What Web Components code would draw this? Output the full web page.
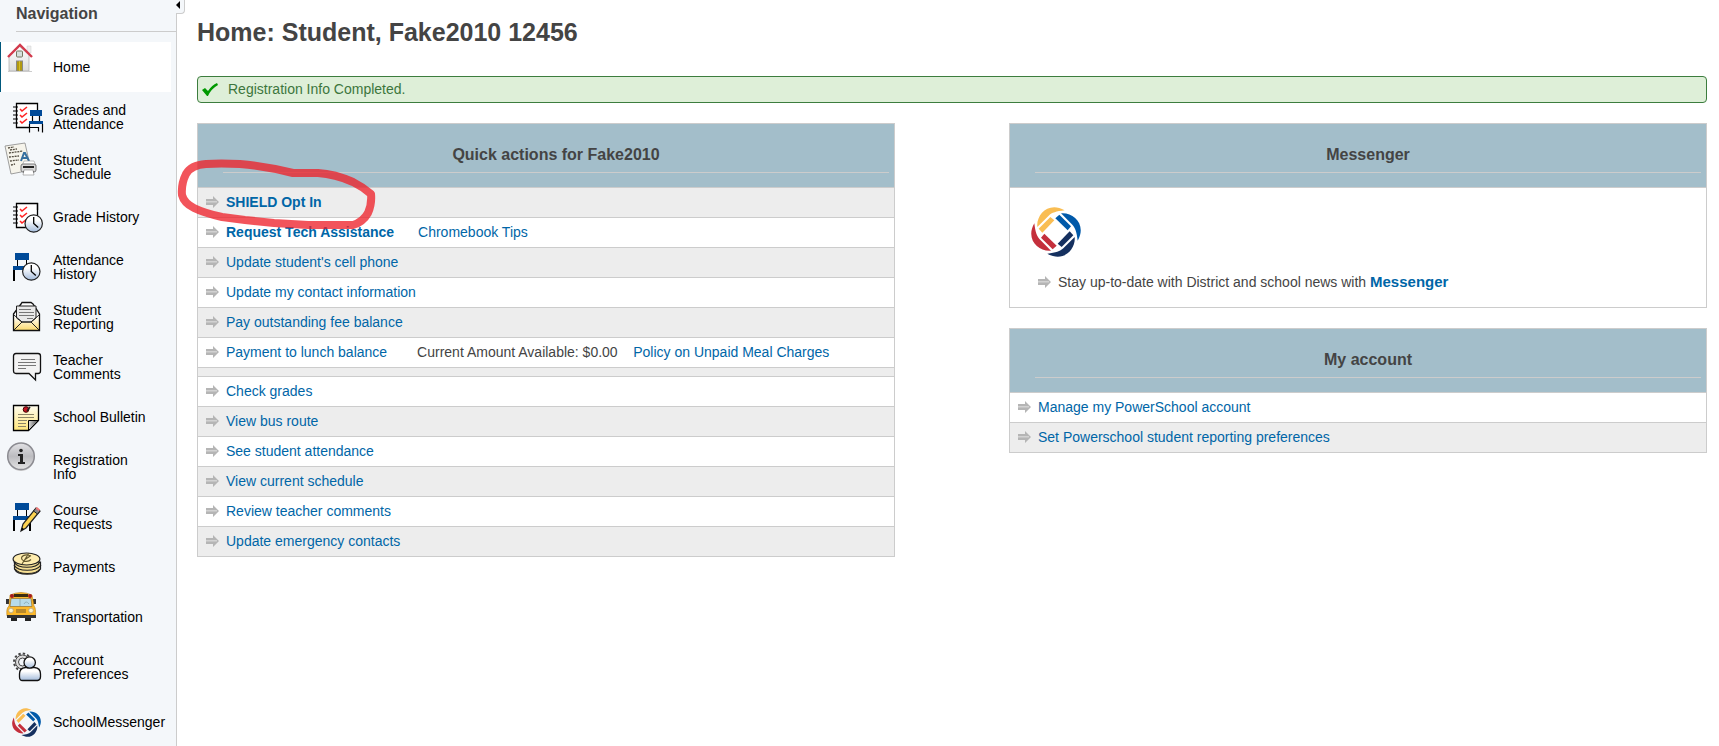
<!DOCTYPE html>
<html lang="en">
<head>
<meta charset="utf-8">
<title>Home: Student, Fake2010 12456</title>
<style>
html, body {
    margin: 0;
    height: 100%;
}
body {
    font: 14px/20px "Liberation Sans", Arial, sans-serif;
    color: #444;
    background: #fff;
}
a {
    color: #0066a7;
    text-decoration: none;
}
a:hover {
    text-decoration: underline;
}
h1 {
    margin: 0 0 29px;
    font-size: 25px;
    line-height: 30px;
}
.columns {
    display: grid;
    grid-template-columns: 1fr 1fr;
    gap: 114px;
    align-items: start;
    margin-top: 20px;
}
.column {
    display: grid;
    gap: 20px;
}
.messenger {
    padding: 19px 21px 10px;
}
.messenger school-icon {
    --icon-size: 50px;
}
.messenger action-row {
    border: 0;
    margin-top: 11px;
    padding-left: 7px;
}
.messenger a {
    font-size: 15px;
}
</style>
</head>
<body>
<portal-page>
    <side-nav slot="nav" heading="Navigation">
        <nav-item icon="home" raised current>Home</nav-item>
        <nav-item icon="grades">Grades and Attendance</nav-item>
        <nav-item icon="schedule" raised>Student Schedule</nav-item>
        <nav-item icon="gradeHistory">Grade History</nav-item>
        <nav-item icon="attendance">Attendance History</nav-item>
        <nav-item icon="reporting">Student Reporting</nav-item>
        <nav-item icon="comments">Teacher Comments</nav-item>
        <nav-item icon="bulletin">School Bulletin</nav-item>
        <nav-item icon="info" raised>Registration Info</nav-item>
        <nav-item icon="course">Course Requests</nav-item>
        <nav-item icon="payments">Payments</nav-item>
        <nav-item icon="bus" raised>Transportation</nav-item>
        <nav-item icon="account">Account Preferences</nav-item>
        <nav-item icon="messenger" tall>SchoolMessenger</nav-item>
    </side-nav>

    <h1>Home: Student, Fake2010 12456</h1>
    <success-message>Registration Info Completed.</success-message>

    <div class="columns">
        <action-panel heading="Quick actions for Fake2010">
            <action-row><a href="#shield"><b>SHIELD Opt In</b></a></action-row>
            <action-row gap="medium"><a href="#tech"><b>Request Tech Assistance</b></a><a href="#tips">Chromebook Tips</a></action-row>
            <action-row><a href="#cell">Update student's cell phone</a></action-row>
            <action-row><a href="#contact">Update my contact information</a></action-row>
            <action-row><a href="#fees">Pay outstanding fee balance</a></action-row>
            <action-row gap="wide"><a href="#lunch">Payment to lunch balance</a><span>Current Amount Available: $0.00 &nbsp;&nbsp; <a href="#policy">Policy on Unpaid Meal Charges</a></span></action-row>
            <action-row spacer></action-row>
            <action-row><a href="#grades">Check grades</a></action-row>
            <action-row><a href="#bus">View bus route</a></action-row>
            <action-row><a href="#attendance">See student attendance</a></action-row>
            <action-row><a href="#schedule">View current schedule</a></action-row>
            <action-row><a href="#comments">Review teacher comments</a></action-row>
            <action-row><a href="#emergency">Update emergency contacts</a></action-row>
        </action-panel>

        <div class="column">
            <action-panel heading="Messenger">
                <div class="messenger">
                    <school-icon name="messenger"></school-icon>
                    <action-row><span>Stay up-to-date with District and school news with <a href="#messenger"><b>Messenger</b></a></span></action-row>
                </div>
            </action-panel>
            <action-panel heading="My account" light-first>
                <action-row><a href="#manage">Manage my PowerSchool account</a></action-row>
                <action-row><a href="#preferences">Set Powerschool student reporting preferences</a></action-row>
            </action-panel>
        </div>
    </div>
    <marker-circle slot="overlay"></marker-circle>
</portal-page>

<script>
const notebook = `
    <path d="M25.500 9V2.500H4.500V26.500H18" fill="#fff" stroke="#000" stroke-width="1.300"/>
    <path d="M1 6h5M1 10h5M1 14h5M1 18h5M1 22h5" stroke="#000" stroke-width="1.200"/>
    <path d="M8 8l2 2 5-4M8 14l2 2 5-4M8 20l2 2 5-4" fill="none" stroke="#f22" stroke-width="1.600"/>`;

const clock = `
    <circle r="8.700" fill="url(#steel)" stroke="#222" stroke-width="1.200"/>
    <path d="M0-6.500V0l4.500 4" fill="none" stroke="#000" stroke-width="1.300"/>`;

const steel = `
    <linearGradient id="steel" x2="0" y2="1"><stop offset=".3" stop-color="#fff"/><stop offset="1" stop-color="#a3bbdb"/></linearGradient>`;

const petal = `
    <path d="M-56-15C-60-52-22-93 26-65C0-62-12-58-22-49L-53-18Z"/>
    <path d="M-52-10L-17-45L-5-35L-41 2Z"/>`;

// each icon: [viewBox, markup]
const icons = {
    home: ['0 0 36 36', `
        <defs><linearGradient id="wall" x2="0" y2="1"><stop stop-color="#fff"/><stop offset="1" stop-color="#ddd"/></linearGradient></defs>
        <path d="M23 4h4v7h-4z" fill="#eee" stroke="#ccc" stroke-width=".5"/>
        <path d="M5 13L15 4l10 9v16H5z" fill="url(#wall)" stroke="#aaa" stroke-width=".7"/>
        <path d="M4 15L16 3l12 12" fill="none" stroke="#d23a4c" stroke-width="2.400"/>
        <rect x="12.500" y="9" width="6" height="6" rx="1" fill="#d5e0dc" stroke="#777661"/>
        <rect x="12.500" y="19" width="6" height="10" fill="#b29a10" stroke="#888"/>
        <path d="M15.500 19v10" stroke="#d6be28"/><path d="M4 29.500h24" stroke="#ccc"/>`],
    grades: ['0 0 32 32', `${notebook}
        <path d="M18 9h12v6H18zM17 20h14v3H17z" fill="#004a98"/>
        <path d="M20.500 15v5M27.500 15v5M17.500 23v8.500M30.500 23v8.500M17.500 26.500h9v4" fill="none" stroke="#000" stroke-width="1.200"/>`],
    schedule: ['0 0 36 36', `
        <path d="M1 4L21 1l6 27-20 4z" fill="#f6f4eb" stroke="#888" stroke-width=".8"/>
        <path d="M4 6l6-1M6 8l7-1M5 11l14-2M5 15l10-1M6 19l9-1M7 23l4-1" stroke="#554f43" stroke-width="1.300" stroke-dasharray="2 .8"/>
        <path d="M17 19l3-8h1l4 8m-7-3h6" fill="none" stroke="#356f9f" stroke-width="2"/>
        <path d="M20 19h10l2 5H18z" fill="#fff" stroke="#999" stroke-width=".6"/>
        <rect x="17" y="22" width="15" height="8" rx="2" fill="#d8d8d8" stroke="#777"/>
        <path d="M19 25h11M19 30h11" stroke="#222" stroke-width="2"/>
        <path d="M20 28h9l1 5H19z" fill="#fff" stroke="#888" stroke-width=".6"/>`],
    gradeHistory: ['0 0 32 32', `<defs>${steel}</defs>${notebook}
        <path d="M25.500 2v14" stroke="#000" stroke-width="1.300"/><g transform="translate(21.700 22.500)">${clock}</g>`],
    attendance: ['0 0 32 32', `<defs>${steel}</defs>
        <path d="M3 2h14v7H3zM1 15h14v4H1z" fill="#004a98"/>
        <path d="M5.500 9v6M14.500 9v6" stroke="#000"/><path d="M2 19v11" stroke="#000" stroke-width="2"/>
        <g transform="translate(19.300 20.500)">${clock}</g>`],
    reporting: ['0 0 32 32', `
        <defs><linearGradient id="env" x2="0" y2="1"><stop offset=".5" stop-color="#fff"/><stop offset="1" stop-color="#fbd96b"/></linearGradient></defs>
        <path d="M1.500 13L9 3l1-1.500h9L21 3l6.500 10v16.500h-26z" fill="url(#env)" stroke="#111" stroke-width="1.300"/>
        <path d="M4.500 17V5h19.500v12l-5 4h-9z" fill="#e9e9e9" stroke="#222"/>
        <path d="M7 8.500h12M7 11.500h15M7 14.500h15M15 17.500h6" stroke="#777"/>
        <path d="M2 14l8 7h9l8-7M2 29l8-8M27 29l-8-8" fill="none" stroke="#222"/>`],
    comments: ['0 0 32 32', `
        <path d="M4 2.500h22q2.500 0 2.500 2.500v15q0 2.500-2.500 2.500h-2.500V29L17 22.500H4Q1.500 22.500 1.500 20V5q0-2.500 2.500-2.500z" fill="#f3f3f3" stroke="#111" stroke-width="1.300"/>
        <path d="M9 8.500h14M6 11.500h18M6 14.500h18M6 17.500h8" stroke="#777"/>`],
    bulletin: ['0 0 32 32', `
        <defs><linearGradient id="note" x2="0" y2="1"><stop stop-color="#fffdf0"/><stop offset="1" stop-color="#ffe67a"/></linearGradient>
        <linearGradient id="fold"><stop stop-color="#ddd"/><stop offset="1" stop-color="#444"/></linearGradient></defs>
        <path d="M1.500 4.500h25v15l-10 10h-15z" fill="url(#note)" stroke="#000" stroke-width="1.300"/>
        <path d="M16.500 29.500v-10h10z" fill="url(#fold)" stroke="#000"/>
        <path d="M6 13.500h16M6 16.500h16M6 19.500h9M6 22.500h8M6 25.500h8" stroke="#8c8567"/>
        <circle cx="14" cy="8.500" r="2.800" fill="#c41422" stroke="#400"/><path d="M15 10l3-4" stroke="#222" stroke-width="1.500"/>`],
    info: ['0 0 36 36', `
        <defs><linearGradient id="ball" x2="0" y2="1"><stop stop-color="#e2e2e5"/><stop offset=".5" stop-color="#bcbcc0"/><stop offset="1" stop-color="#e4e4e4"/></linearGradient></defs>
        <circle cx="17" cy="15.500" r="13.500" fill="#ccc"/>
        <circle cx="17" cy="14.300" r="13.300" fill="url(#ball)" stroke="#8c8c92" stroke-width="1.500"/>
        <circle cx="17" cy="8.500" r="1.800" fill="#222"/>
        <path d="M14 12h5v8h2v2h-7v-2h2v-6h-2z" fill="#222"/>`],
    course: ['0 0 32 32', `
        <path d="M3 2h14v7H3zM1 15h18v4H1z" fill="#004a98"/>
        <path d="M5.500 9v6M14.500 9v6" stroke="#000"/><path d="M2 19v11M18 20v10" stroke="#000" stroke-width="2"/>
        <path d="M9 30l2-7L24 7l4 3-14 17z" fill="#fcd251" stroke="#222" stroke-width="1.200"/>
        <path d="M21.500 10L24 7l4 3-2.500 3z" fill="#888" stroke="#222"/><path d="M23.500 7.500L25 6l3 2.500-1 2z" fill="#e77"/>
        <path d="M9 30l1-3.500 2 1.500z"/>`],
    payments: ['0 0 32 32', `
        <g fill="#f6df93" stroke="#222" stroke-width="1.200">
            <path d="M2.500 11v7c3 7 22 7 26 0v-7z"/>
            <path d="M2 14c4 7 22 7 27 0M2 11c4 7 22 7 26 0M3 18c4 6 21 6 25 0" fill="none"/>
            <ellipse cx="14.500" cy="8" rx="13.400" ry="6" fill="#ffedae"/>
        </g>
        <path d="M18 4.500c-5-2-10 1-8 4s7 2 9 0M17 2L10 13M13 8.500l6-4" fill="none" stroke="#665a30" stroke-width="1.200"/>`],
    bus: ['0 0 36 36', `
        <path d="M7 23h6v6H7zM21 23h6v6h-6z" fill="#222"/>
        <path d="M2 7h3v5H2zM29 7h3v5h-3z" fill="#333"/>
        <path d="M6 3Q17-2 28 3l2 11q2 2 1.500 10H3q-1-8 2-10z" fill="#fdb92a" stroke="#b8801a" stroke-width=".6"/>
        <path d="M10 2h14v3H10z" fill="#3b2d10"/>
        <circle cx="8" cy="4" r="2" fill="#a41a20"/><circle cx="26" cy="4" r="2" fill="#a41a20"/>
        <path d="M7 6.500h20l1 8H6z" fill="#b7dbe9" stroke="#987028" stroke-width=".7"/>
        <path d="M16 7v7M20 12q2-4 5 0" fill="none" stroke="#8fb0ba"/>
        <circle cx="7" cy="18.500" r="2.300" fill="#fff4c8" stroke="#999" stroke-width=".6"/>
        <circle cx="27" cy="18.500" r="2.300" fill="#fff4c8" stroke="#999" stroke-width=".6"/>
        <path d="M12 17h10v4H12z" fill="#b9892b"/><path d="M3 23h29v3H3z" fill="#333"/>`],
    account: ['0 0 32 32', `<defs>${steel}</defs>
        <circle cx="10.500" cy="11" r="8.500" fill="none" stroke="#444" stroke-width="2" stroke-dasharray="2.400 2.050"/>
        <circle cx="10.500" cy="11" r="7" fill="#ddd" stroke="#444"/><circle cx="10.500" cy="11" r="4" fill="#f4f7fa" stroke="#444"/>
        <path d="M7.500 26v-3q0-6 6-6.500h9q6 .5 6 6.500v3q0 3-3 3.500H10.500q-3 0-3-3.500z" fill="url(#steel)" stroke="#111" stroke-width="1.300"/>
        <circle cx="17.700" cy="11.500" r="5.700" fill="url(#steel)" stroke="#111" stroke-width="1.300"/>`],
    messenger: ['-75 -75 150 150', `
        <g fill="#f9bd53">${petal}</g>
        <g fill="#0059a9" transform="rotate(90)">${petal}</g>
        <g fill="#15305f" transform="rotate(180)">${petal}</g>
        <g fill="#c42f3c" transform="rotate(270)">${petal}</g>`],
    arrow: ['0 0 13 12', `
        <path d="M0 3h7V0l6 6-6 6V9H0z" fill="#b5b5b5"/><path d="M0 5h11v1.500H0z" fill="#d2d2d2"/>`],
    check: ['0 0 16 13', `
        <path d="M0 7l3-2 3 3Q10 2 15 0l1 2Q9 6 6 13H5z" fill="#090"/>`],
};

class SchoolIcon extends HTMLElement {
    constructor() {
        super();
        this.attachShadow({ mode: 'open' });
    }

    connectedCallback() {
        const [viewBox, markup] = icons[this.getAttribute('name')];
        this.shadowRoot.innerHTML = `
<style>
:host {
    display: block;
    flex: none;
    width: var(--icon-size, 32px);
    height: var(--icon-height, var(--icon-size, 32px));
}
svg {
    display: block;
    width: 100%;
    height: 100%;
}
</style>
<svg viewBox="${viewBox}" aria-hidden="true">${markup}</svg>`;
    }
}

class PortalPage extends HTMLElement {
    constructor() {
        super();
        this.attachShadow({ mode: 'open' }).innerHTML = `
<style>
:host {
    display: flex;
    position: relative;
    height: 100vh;
    overflow: hidden;
}
main {
    flex: 1;
    min-width: 0;
    padding: 17px 12px 20px 20px;
}
</style>
<slot name="nav"></slot>
<main><slot></slot></main>
<slot name="overlay"></slot>`;
    }
}

class SideNav extends HTMLElement {
    constructor() {
        super();
        this.attachShadow({ mode: 'open' });
    }

    connectedCallback() {
        this.shadowRoot.innerHTML = `
<style>
:host {
    display: block;
    position: relative;
    flex: none;
    width: 176px;
    background: #f4f7fa;
    border-right: 1px solid #ccc;
}
h2 {
    margin: 0 0 10px 16px;
    padding: 4px 0 7px;
    border-bottom: 1px solid #ccc;
    font-size: 16px;
    line-height: 20px;
}
nav {
    margin-right: 5px;
}
/* tab hanging over the right border */
button {
    position: absolute;
    top: 0;
    left: 100%;
    width: 9px;
    height: 14px;
    padding: 0;
    border: solid #ccc;
    border-width: 0 1px 1px 0;
    border-radius: 0 0 4px 0;
    background: #f4f7fa;
}
svg {
    display: block;
    width: 4px;
    height: 8px;
    margin-bottom: 4px;
}
</style>
<h2>${this.getAttribute('heading')}</h2>
<nav><slot></slot></nav>
<button type="button" aria-label="Collapse navigation"><svg viewBox="0 0 4 8"><path d="M4 0v8L0 4z"/></svg></button>`;
    }
}

class NavItem extends HTMLElement {
    constructor() {
        super();
        this.attachShadow({ mode: 'open' });
    }

    connectedCallback() {
        this.shadowRoot.innerHTML = `
<style>
:host {
    display: block;
}
a {
    display: grid;
    grid-template-columns: 41px 1fr;
    align-items: center;
    height: 50px;
    padding-left: 12px;
    color: #000;
    line-height: 14px;
    text-decoration: none;
}
span {
    max-width: 100px;
}
:host([raised]) a {
    grid-template-columns: 49px 1fr;
    padding-left: 4px;
}
:host([raised]) school-icon {
    --icon-size: 36px;
    align-self: start;
}
:host([tall]) a {
    height: 60px;
}
:host([tall]) school-icon {
    --icon-size: 29px;
}
:host([current]) a {
    background: #fff;
    box-shadow: inset 1px 0 #00587c;
}
</style>
<a href="#${this.getAttribute('icon')}"><school-icon name="${this.getAttribute('icon')}"></school-icon><span><slot></slot></span></a>`;
    }
}

class SuccessMessage extends HTMLElement {
    constructor() {
        super();
        this.attachShadow({ mode: 'open' }).innerHTML = `
<style>
:host {
    display: flex;
    align-items: center;
    gap: 10px;
    padding: 2px 4px 3px;
    border: 1px solid #3c7d3e;
    border-radius: 4px;
    background: #deefd8;
    color: #3c763d;
}
school-icon {
    --icon-size: 16px;
    --icon-height: 13px;
}
</style>
<school-icon name="check"></school-icon>
<div role="status"><slot></slot></div>`;
    }
}

class ActionPanel extends HTMLElement {
    constructor() {
        super();
        this.attachShadow({ mode: 'open' });
    }

    connectedCallback() {
        this.shadowRoot.innerHTML = `
<style>
:host {
    display: block;
    border: 1px solid #ccc;
}
header {
    padding: 21px 5px 14px 25px;
    background: #a3beca;
}
h2 {
    margin: 0;
    padding-bottom: 7px;
    border-bottom: 1px solid #ccc;
    font-size: 16px;
    line-height: 20px;
    text-align: center;
}
::slotted(*) {
    border-top: 1px solid #ccc;
}
:host(:not([light-first])) ::slotted(action-row:nth-child(odd)),
:host([light-first]) ::slotted(action-row:nth-child(even)) {
    background: #ededed;
}
</style>
<header><h2>${this.getAttribute('heading')}</h2></header>
<slot></slot>`;
    }
}

class ActionRow extends HTMLElement {
    constructor() {
        super();
        this.attachShadow({ mode: 'open' });
    }

    connectedCallback() {
        const arrow = this.hasAttribute('spacer') ? '' : '<school-icon name="arrow"></school-icon>';
        this.shadowRoot.innerHTML = `
<style>
:host {
    display: flex;
    align-items: center;
    padding: 4px 8px 5px;
}
:host([spacer]) {
    padding: 4px 8px;
}
school-icon {
    --icon-size: 13px;
    --icon-height: 12px;
    margin-right: 7px;
}
div {
    display: flex;
}
:host([gap=medium]) div {
    gap: 24px;
}
:host([gap=wide]) div {
    gap: 30px;
}
</style>
${arrow}<div><slot></slot></div>`;
    }
}

// hand drawn ring round the first quick action
class MarkerCircle extends HTMLElement {
    constructor() {
        super();
        this.attachShadow({ mode: 'open' }).innerHTML = `
<style>
:host {
    position: absolute;
    left: 170px;
    top: 150px;
    pointer-events: none;
}
svg {
    display: block;
}
</style>
<svg width="210" height="84" viewBox="170 150 210 84" aria-hidden="true">
    <path d="M293 173Q265 166 240 164Q220 163 206 164Q191 165 186 174Q181 184 182 195Q184 203 194 208Q204 213 222 217L245 220L274 223L308 225L353 225Q363 222 368 213Q372 204 371 194Q363 187 353 182Q335 174 318 173Z" fill="none" stroke="rgb(238, 30, 39)" stroke-opacity=".76" stroke-width="8" stroke-linejoin="round"/>
</svg>`;
    }
}

customElements.define('school-icon', SchoolIcon);
customElements.define('portal-page', PortalPage);
customElements.define('side-nav', SideNav);
customElements.define('nav-item', NavItem);
customElements.define('success-message', SuccessMessage);
customElements.define('action-panel', ActionPanel);
customElements.define('action-row', ActionRow);
customElements.define('marker-circle', MarkerCircle);
</script>
</body>
</html>
